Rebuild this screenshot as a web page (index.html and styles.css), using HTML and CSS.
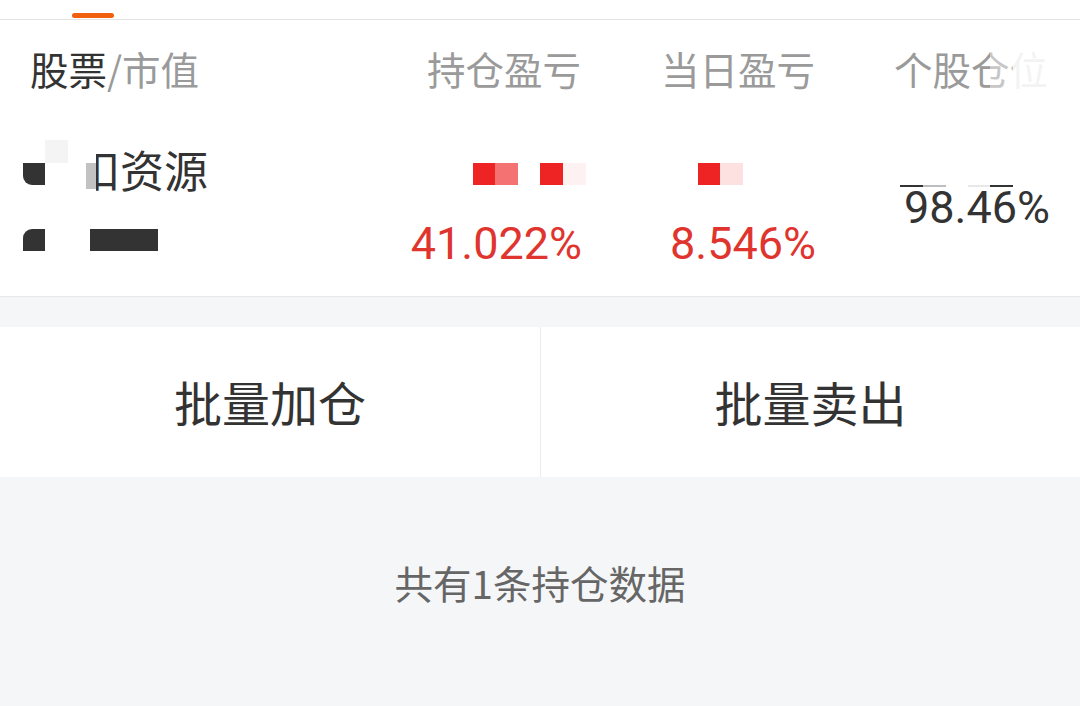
FILE: index.html
```html
<!DOCTYPE html>
<html lang="zh-CN">
<head>
<meta charset="utf-8">
<title>持仓</title>
<link rel="stylesheet" href="styles.css">
</head>
<body>
<div class="page">
  <div class="tabbar"><span class="tab-indicator"></span></div>

  <div class="thead">
    <div class="th th-name"><span class="strong">股票</span>/市值</div>
    <div class="th">持仓盈亏</div>
    <div class="th">当日盈亏</div>
    <div class="th th-last">个股仓位</div>
    <span class="fade fade-a"></span>
    <span class="fade fade-b"></span>
  </div>

  <div class="trow">
    <div class="td td-name">
      <div class="line1 stock-name">扣资源</div>
      <div class="line2"></div>
    </div>
    <div class="td td-num">
      <div class="line1"></div>
      <div class="line2 red">41.022%</div>
    </div>
    <div class="td td-num">
      <div class="line1"></div>
      <div class="line2 red">8.546%</div>
    </div>
    <div class="td td-pos">
      <div class="pos">98.46%</div>
    </div>

    <div class="mosaic">
      <span class="m m-mask"></span>
      <span class="m m-gray"></span>
      <span class="m m-dark1"></span>
      <span class="m m-light"></span>
      <span class="m m-dark2"></span>
      <span class="m m-bar"></span>
      <span class="m r r1"></span>
      <span class="m r r2"></span>
      <span class="m r r3"></span>
      <span class="m r r4"></span>
      <span class="m r r5"></span>
      <span class="m r r6"></span>
      <span class="m p p1"></span>
      <span class="m p p2"></span>
      <span class="m p p3"></span>
      <span class="m p p4"></span>
    </div>
  </div>

  <div class="spacer"></div>

  <div class="actions">
    <div class="action">批量加仓</div>
    <div class="action">批量卖出</div>
  </div>

  <div class="footer-note">共有1条持仓数据</div>
</div>
</body>
</html>
```

FILE: styles.css
```css
* { box-sizing: border-box; margin: 0; padding: 0; }

html, body {
  width: 1080px;
  height: 706px;
  overflow: hidden;
  background: #f5f6f8;
  font-family: Roboto, "Noto Sans CJK SC", sans-serif;
}

.page {
  width: 1080px;
  height: 706px;
  display: flex;
  flex-direction: column;
}

.tabbar {
  height: 20px;
  background: #fff;
  border-bottom: 1px solid #e3e3e3;
  padding: 13px 0 0 72px;
}
.tab-indicator {
  display: block;
  width: 42px;
  height: 5px;
  border-radius: 3px;
  background: #f0600e;
}

.thead {
  position: relative;
  height: 96px;
  background: #fff;
  display: grid;
  grid-template-columns: 1fr 234px 234px 233px;
  padding: 0 32px 0 30px;
  align-items: center;
}
.th {
  font-family: "Noto Sans CJK SC", sans-serif;
  font-size: 38.5px;
  color: #9a9a9a;
  text-align: right;
  line-height: 50px;
}
.th-name { text-align: left; }
.strong { color: #333; }

.fade { position: absolute; top: 20px; height: 60px; background: #fff; }
.fade-a { left: 990px; width: 23px; opacity: 0.45; }
.fade-b { left: 1013px; width: 40px; opacity: 0.88; }

.trow {
  position: relative;
  height: 181px;
  background: #fff;
  border-bottom: 1px solid #e8e8e8;
  display: grid;
  grid-template-columns: 1fr 234px 234px 233px;
  padding: 0 32px 0 30px;
}
.td {
  display: flex;
  flex-direction: column;
  gap: 12px;
  padding-top: 26px;
}
.line1, .line2 { height: 60px; line-height: 60px; }
.td-num { align-items: flex-end; }
.stock-name {
  font-family: "Noto Sans CJK SC", sans-serif;
  font-size: 44px;
  color: #333;
  padding-left: 46px;
  margin-top: -3px;
}
.red {
  color: #e0352f;
  font-size: 45px;
  margin-right: -1px;
}
.td-pos {
  padding-top: 0;
  justify-content: center;
  align-items: flex-end;
}
.pos {
  font-size: 45px;
  color: #333;
  line-height: 52px;
  margin-top: 4px;
  margin-right: -2px;
}

.mosaic { position: absolute; inset: 0; pointer-events: none; }
.m { position: absolute; display: block; }
.m-mask { left: 45px; top: 28px; width: 51px; height: 52px; background: #fff; }
.m-gray { left: 86px; top: 47px; width: 10px; height: 26px; background: #9a9a9a; opacity: 0.6; }
.m-dark1 { left: 23px; top: 47px; width: 22px; height: 22px; background: #333; border-bottom-left-radius: 9px; }
.m-light { left: 45px; top: 24px; width: 23px; height: 23px; background: #f4f4f4; }
.m-dark2 { left: 23px; top: 113px; width: 22px; height: 22px; background: #333; border-top-left-radius: 9px; }
.m-bar { left: 90px; top: 113px; width: 68px; height: 22px; background: #333; }

.r { top: 47px; width: 23px; height: 22px; }
.r1 { left: 473px; background: #ee2424; }
.r2 { left: 495px; background: #f47272; }
.r3 { left: 540px; background: #ee2424; }
.r4 { left: 563px; background: #fdf1f1; }
.r5 { left: 698px; background: #ee2424; }
.r6 { left: 720px; background: #fde1e1; }

.p { top: 69px; height: 2px; width: 23px; }
.p1 { left: 900px; background: #333; }
.p2 { left: 923px; background: #bdbdbd; }
.p3 { left: 968px; background: #e8e8e8; }
.p4 { left: 990px; background: #333; }

.spacer { height: 30px; }

.actions {
  height: 150px;
  display: grid;
  grid-template-columns: 1fr 1fr;
  background: #fff;
}
.action {
  display: flex;
  align-items: center;
  justify-content: center;
  font-family: "Noto Sans CJK SC", sans-serif;
  font-size: 48px;
  color: #333;
  padding-bottom: 2px;
}
.action + .action { border-left: 1px solid #ececec; }

.footer-note {
  text-align: center;
  font-family: "Noto Sans CJK SC", sans-serif;
  font-size: 38.5px;
  color: #666;
  line-height: 50px;
  padding-top: 80px;
}
```
